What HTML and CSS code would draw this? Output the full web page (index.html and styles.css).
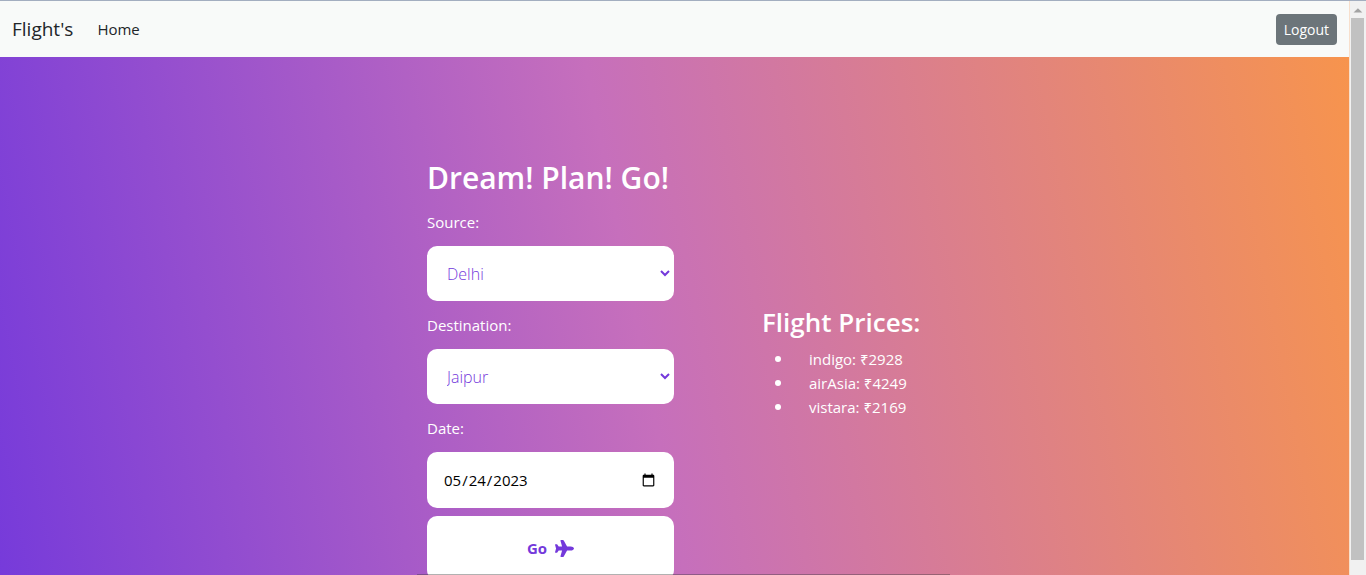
FILE: index.html
```
<!DOCTYPE html>
<html lang="en">
<head>
<meta charset="utf-8">
<title>Flight's</title>
<link rel="stylesheet" href="styles.css">
</head>
<body>
<div class="window">
  <div class="page">
    <nav class="navbar">
      <a class="brand" href="#">Flight's</a>
      <a class="nav-link" href="#">Home</a>
      <button class="logout" type="button">Logout</button>
    </nav>
    <main class="hero">
      <form class="search">
        <h1 class="title">Dream! Plan! Go!</h1>
        <label class="label" for="source">Source:</label>
        <div class="select-wrap">
          <select class="field" id="source"><option>Delhi</option><option>Jaipur</option></select>
          <svg class="chevron" viewBox="0 0 10 7" aria-hidden="true"><path d="M1 1l4 4 4-4"/></svg>
        </div>
        <label class="label" for="destination">Destination:</label>
        <div class="select-wrap">
          <select class="field" id="destination"><option>Jaipur</option><option>Delhi</option></select>
          <svg class="chevron" viewBox="0 0 10 7" aria-hidden="true"><path d="M1 1l4 4 4-4"/></svg>
        </div>
        <label class="label" for="date">Date:</label>
        <input class="field date" id="date" type="date" value="2023-05-24">
        <button class="go" type="submit">Go
          <svg class="plane" viewBox="0 0 576 512" aria-hidden="true"><path d="M482.300 192c34.200 0 93.700 29 93.700 64c0 36-59.500 64-93.700 64l-116.600 0L265.200 495.900c-5.700 10-16.300 16.100-27.800 16.100l-56.200 0c-10.600 0-18.300-10.200-15.400-20.400l49-171.600L112 320 68.800 377.600c-3 4-7.800 6.400-12.800 6.400l-42 0c-7.800 0-14-6.300-14-14c0-1.300 .2-2.600 .5-3.900L32 256 .5 145.900c-.4-1.300-.5-2.600-.5-3.900c0-7.800 6.300-14 14-14l42 0c5 0 9.800 2.400 12.800 6.400L112 192l102.900 0-49-171.600C162.900 10.200 170.600 0 181.200 0l56.200 0c11.500 0 22.100 6.200 27.800 16.100L365.700 192l116.600 0z"/></svg>
        </button>
      </form>
      <section class="prices">
        <h2 class="prices-title">Flight Prices:</h2>
        <ul class="price-list">
          <li>indigo: ₹2928</li>
          <li>airAsia: ₹4249</li>
          <li>vistara: ₹2169</li>
        </ul>
      </section>
    </main>
  </div>
  <div class="scrollbar" aria-hidden="true">
    <svg class="scroll-arrow" viewBox="0 0 17 17"><path d="M4 12l5-5 5 5z"/></svg>
    <div class="scroll-thumb"></div>
  </div>
  <div class="edge" aria-hidden="true"></div>
</div>
</body>
</html>
```
FILE: styles.css
```
* { box-sizing: border-box; }

body {
  margin: 0;
  font-family: "Open Sans", "Noto Sans", sans-serif;
  font-size: 15px;
  line-height: 24px;
  color: #fff;
}

.window {
  position: relative;
  display: flex;
  height: 100vh;
  overflow: hidden;
  border-top: 1px solid #a3aec0;
}

.page { flex: 1; min-width: 0; }

.navbar {
  display: flex;
  align-items: center;
  height: 56px;
  padding: 0 12px;
  background: #f8faf9;
}

.brand, .nav-link { color: #212529; text-decoration: none; }
.brand { margin-right: 24px; font-size: 19px; }

.logout {
  height: 31px;
  margin-left: auto;
  padding: 0 8px;
  border: 0;
  border-radius: 4px;
  background: #6c757a;
  color: #fff;
  font: 14px/21px "Open Sans", "Noto Sans", sans-serif;
}

.hero {
  display: flex;
  align-items: center;
  justify-content: center;
  gap: 88px;
  min-height: 624px;
  background: linear-gradient(79deg, #7439db, #c66fbc 48%, #f7944d);
}

.search { display: flex; flex-direction: column; width: 247px; }

.title {
  margin: 0 0 12px;
  font-size: 30px;
  line-height: 40px;
  font-weight: 600;
  white-space: nowrap;
}

.label { margin-bottom: 12px; }

.select-wrap { position: relative; margin-bottom: 12px; }

.field {
  display: block;
  appearance: none;
  width: 100%;
  height: 55px;
  padding: 0 20px;
  border: 0;
  border-radius: 10px;
  background: #fff;
  color: #7439db;
  font: 300 16px/24px "Open Sans", "Noto Sans", sans-serif;
}

.chevron {
  position: absolute;
  top: 24px;
  right: 4px;
  width: 10px;
  height: 7px;
  fill: none;
  stroke: #7439db;
  stroke-width: 2;
}

.date {
  height: 56px;
  margin-bottom: 8px;
  padding: 0 16px;
  color: #000;
  font-size: 15px;
  font-weight: 400;
}

.go {
  display: flex;
  align-items: center;
  justify-content: center;
  gap: 8px;
  height: 64px;
  border: 0;
  border-radius: 10px;
  background: #fff;
  color: #7439db;
  font: 700 15px/24px "Open Sans", "Noto Sans", sans-serif;
}

.plane { width: 19px; height: 17px; fill: #7439db; }

.prices { min-width: 160px; }

.prices-title {
  margin: 0 0 6px;
  font-size: 26px;
  line-height: 36px;
  font-weight: 600;
  white-space: nowrap;
}

.price-list { margin: 0 0 16px; padding-left: 32px; }
.price-list li { height: 24px; padding-left: 15px; }
.price-list li::marker { font-size: 18px; }

.scrollbar {
  width: 17px;
  border-left: 1px solid #f7dfcc;
  background: #f1f1f1;
}

.scroll-arrow { display: block; width: 15px; height: 17px; fill: #a3a3a3; }

.scroll-thumb {
  width: 13px;
  height: calc(100% - 32px);
  margin-left: 1px;
  background: #c1c1c1;
}

.edge {
  position: absolute;
  bottom: 0;
  left: 417px;
  width: 533px;
  height: 1px;
  background: rgba(60, 60, 60, 0.4);
}
```
